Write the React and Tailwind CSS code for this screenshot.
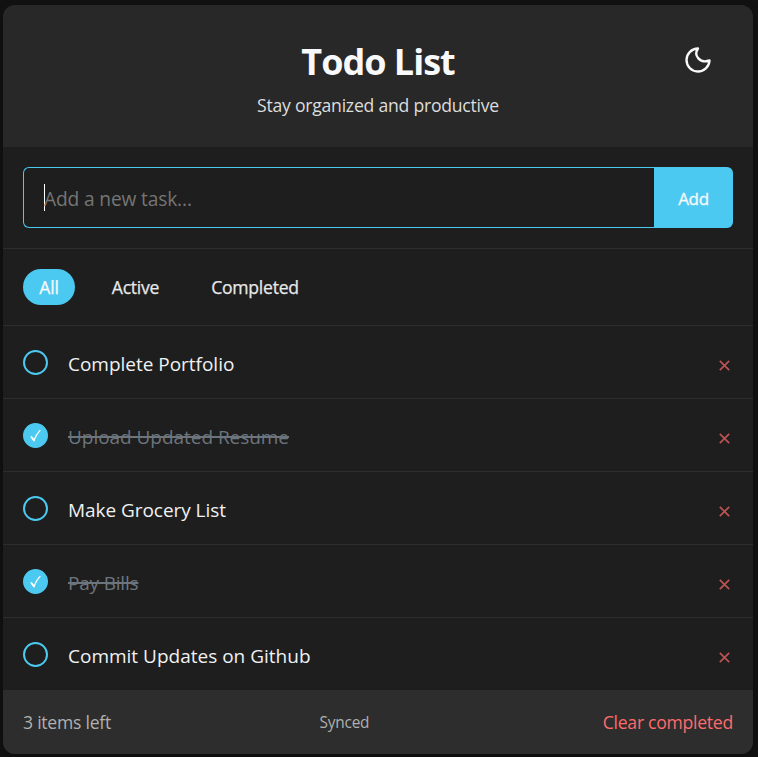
import { useState } from "react";

const TASKS = [
  { id: 1, text: "Complete Portfolio", done: false, tracking: "tracking-[-0.02px]" },
  { id: 2, text: "Upload Updated Resume", done: true, tracking: "tracking-[-0.04px]" },
  { id: 3, text: "Make Grocery List", done: false, tracking: "tracking-[-0.05px]" },
  { id: 4, text: "Pay Bills", done: true, tracking: "tracking-[-0.2px]" },
  { id: 5, text: "Commit Updates on Github", done: false, tracking: "tracking-[0px]" },
];

function MoonIcon() {
  return (
    <svg width="30" height="30" viewBox="0 0 24 24" fill="none" stroke="#f8f9fa" strokeWidth="1.9" strokeLinecap="round" strokeLinejoin="round">
      <path d="M21.2 12.4A9.2 9.2 0 1 1 12 2.8C8.2 8.5 13.5 15 21.2 12.4z" />
    </svg>
  );
}

function Checkbox({ done, onClick }) {
  return (
    <button
      onClick={onClick}
      className={`flex size-[25px] shrink-0 items-center justify-center rounded-full border-2 border-[#4cc9f0] ${done ? "bg-[#4cc9f0]" : ""}`}
    >
      {done && (
        <svg width="13" height="13" viewBox="0 0 13 13" fill="none" stroke="white" strokeLinecap="round" strokeLinejoin="round">
          <path d="M2.4 8 L5 11.4" strokeWidth="1.9" />
          <path d="M5 11.4 C6.4 7.5 8.4 4.2 11 1.4" strokeWidth="1.3" />
        </svg>
      )}
    </button>
  );
}

function TaskRow({ task, last, onToggle }) {
  return (
    <li className={`flex items-center px-5 ${last ? "h-[72px]" : "h-[73px] border-b border-[#2d2d2d]"}`}>
      <Checkbox done={task.done} onClick={onToggle} />
      <span
        className={`mt-1 ml-5 flex-1 text-[19px] leading-7 whitespace-nowrap ${task.tracking} ${
          task.done ? "text-[#6c757d] line-through decoration-2" : "text-[#f0f1f2]"
        }`}
      >
        {task.text}
      </span>
      <button className="mt-[7px] mr-[3px]">
        <svg width="11" height="11" viewBox="0 0 11 11" stroke="#bc5353" strokeWidth="1.7">
          <path d="M.8 .8 L10.2 10.2 M10.2 .8 L.8 10.2" />
        </svg>
      </button>
    </li>
  );
}

export default function App() {
  const [tasks, setTasks] = useState(TASKS);
  const toggle = (id) => setTasks(tasks.map((t) => (t.id === id ? { ...t, done: !t.done } : t)));
  const left = tasks.filter((t) => !t.done).length;

  return (
    <div className="h-[757px] overflow-hidden bg-[#121212] pt-[5px] pr-[5px] pl-[3px] font-['Open_Sans','Noto_Sans',sans-serif]">
      <main className="flex h-[749px] w-[750px] flex-col overflow-hidden rounded-[12px] bg-[#1e1e1e] shadow-[0_4px_12px_rgba(0,0,0,0.3)]">
        <header className="grid h-[142px] shrink-0 grid-cols-[1fr_auto_1fr] bg-[#282828] px-[40px]">
          <div />
          <div className="flex flex-col items-center pt-[32px]">
            <h1 className="text-[36px] leading-[50px] font-bold tracking-[-1px] text-[#f8f9fa]">Todo List</h1>
            <p className="mt-[5px] text-[17.6px] leading-[26px] tracking-[-0.23px] text-[#dcdddd]">Stay organized and productive</p>
          </div>
          <button className="mt-[40px] size-[30px] justify-self-end">
            <MoonIcon />
          </button>
        </header>

        <form className="flex h-[102px] shrink-0 border-b border-[#2d2d2d] p-5" onSubmit={(e) => e.preventDefault()}>
          <div className="flex flex-1 items-center rounded-l-[6px] border border-r-0 border-[#4cc9f0] pl-5">
            <span className="h-[27px] w-px bg-white" />
            <input
              className="-ml-px min-w-0 flex-1 bg-transparent pt-[3px] text-[19.2px] tracking-[-0.16px] text-white outline-none placeholder:text-[#757575]"
              placeholder="Add a new task..."
            />
          </div>
          <button className="w-[79px] rounded-r-[6px] bg-[#4cc9f0] pt-[3px] text-[17px] tracking-[-0.3px] text-[#f8f9fa] [-webkit-text-stroke:0.3px]">Add</button>
        </form>

        <nav className="flex h-[77px] shrink-0 items-start gap-5 border-b border-[#2d2d2d] px-5 pt-5 text-[17.6px] tracking-[-0.25px] text-[#e6e8ea] [-webkit-text-stroke:0.25px]">
          <button className="h-9 w-[52px] rounded-[20px] bg-[#4cc9f0] text-[#f8f9fa]">All</button>
          <button className="h-9 w-[81px]">Active</button>
          <button className="-ml-px h-9 w-[120px]">Completed</button>
        </nav>

        <ul className="shrink-0">
          {tasks.map((t, i) => (
            <TaskRow key={t.id} task={t} last={i === tasks.length - 1} onToggle={() => toggle(t.id)} />
          ))}
        </ul>

        <footer className="flex flex-1 items-center justify-between bg-[#2d2d2d] px-5 text-[17.6px] text-[#b0b0b0]">
          <span className="tracking-[-0.25px]">{left} items left</span>
          <span className="mt-[2px] mr-[25px] text-[15.4px] tracking-[-0.2px]">Synced</span>
          <button className="tracking-[-0.27px] text-[#ff6b6b]">Clear completed</button>
        </footer>
      </main>
    </div>
  );
}
